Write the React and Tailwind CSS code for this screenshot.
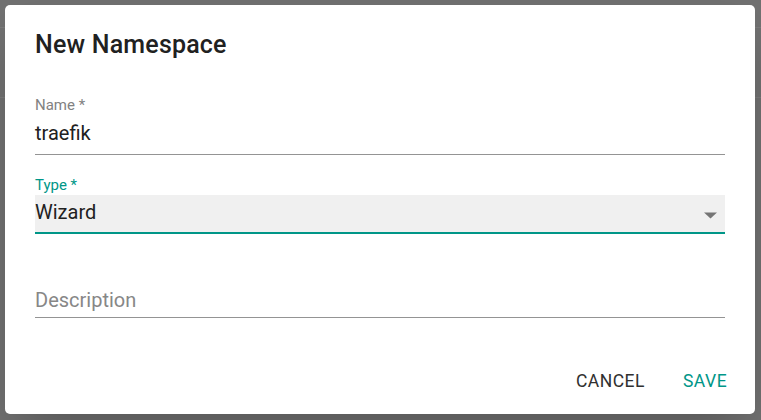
import React from 'react';

const ArrowDropDown = () => (
  <svg width="13" height="7" viewBox="0 0 13 7" className="mt-[17px] mr-[8px] shrink-0">
    <path d="M0 0.5 L6.5 6.5 L13 0.5 Z" fill="#757575" />
  </svg>
);

const App = () => {
  return (
    <div className="relative w-[761px] h-[420px] overflow-hidden bg-[#717171] font-['Roboto',sans-serif]">
      {/* page behind the backdrop */}
      <div className="h-[28px] border-b border-[#7b7b7b] overflow-hidden">
        <div className="ml-[168px] -mt-[16px] text-[14px] leading-[16px] text-[#2c2c2c]">Type</div>
      </div>
      <div className="h-[70px] border-b border-[#7b7b7b]" />

      {/* Dialog */}
      <div className="absolute left-[5px] top-[5px] w-[750px] h-[409px] bg-white rounded-[5px] shadow-2xl">
        <div className="px-[30px] pt-[20px]">
          <h2 className="text-[25px] leading-[40px] font-medium text-[#212121] tracking-[0.2px]">New Namespace</h2>

          {/* Name */}
          <div className="mt-[33px]">
            <div className="text-[15px] leading-[15px] text-[#828282]">Name *</div>
            <div className="pt-[8px] pb-[9px] text-[20px] leading-[24px] text-[#212121] border-b border-[#949494]">
              traefik
            </div>
          </div>

          {/* Type */}
          <div className="mt-[23px]">
            <div className="text-[15px] leading-[15px] text-[#009688]">Type *</div>
            <div className="mt-[2px] flex items-start justify-between bg-[#f0f0f0] border-b-2 border-[#009688]">
              <span className="pt-[5px] pb-[7px] text-[20px] leading-[25px] text-[#212121]">Wizard</span>
              <ArrowDropDown />
            </div>
          </div>

          {/* Description */}
          <div className="mt-[54px] pb-[5px] text-[20px] leading-[24px] text-[#878787] border-b border-[#949494]">
            Description
          </div>
        </div>

        {/* Actions */}
        <div className="mt-[45px] px-[10px] flex justify-end gap-[10px]">
          <button className="min-w-[80px] px-[10px] py-[8px] text-[17.5px] leading-[20px] tracking-[0.5px] text-[#303030] uppercase">
            Cancel
          </button>
          <button className="min-w-[80px] px-[10px] py-[8px] text-[17.5px] leading-[20px] tracking-[0.5px] text-[#009688] uppercase">
            Save
          </button>
        </div>
      </div>
    </div>
  );
};

export default App;
